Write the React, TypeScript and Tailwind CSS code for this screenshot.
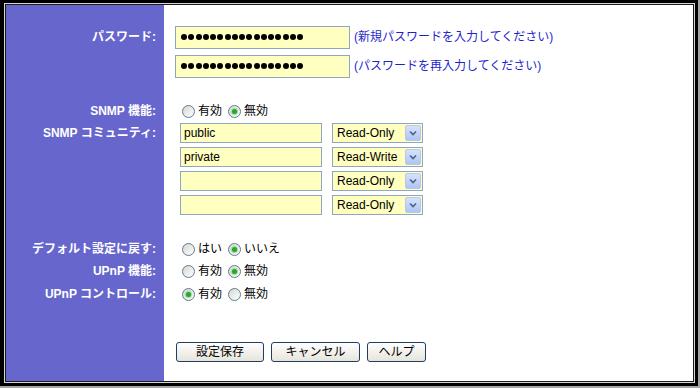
import type { ReactNode } from "react";

const FONT = { fontFamily: '"Liberation Sans", "Noto Sans CJK JP", sans-serif' };

function Row({ h, label, children }: { h: string; label?: string; children?: ReactNode }) {
  return (
    <div className={`flex ${h}`}>
      <div className="w-[158px] shrink-0 bg-[#6666cc] flex items-center justify-end pr-[8px] text-[12px] font-bold text-white whitespace-nowrap">
        {label}
      </div>
      <div className="flex-1 flex items-center">{children}</div>
    </div>
  );
}

function Radio({ checked }: { checked?: boolean }) {
  return (
    <span className="w-[13px] h-[13px] rounded-full border border-[#5f7b98] bg-linear-to-br from-[#d6d6d0] to-white flex items-center justify-center shrink-0">
      {checked && <span className="w-[5px] h-[5px] rounded-full bg-[#2ba62b] shadow-[0_0_1px_1px_#9ad89a]" />}
    </span>
  );
}

function RadioPair({ a, b, first }: { a: string; b: string; first: boolean }) {
  return (
    <div className="flex items-center text-[12px] text-black ml-[18px]">
      <Radio checked={first} />
      <span className="ml-[3px]">{a}</span>
      <span className="ml-[6px]">
        <Radio checked={!first} />
      </span>
      <span className="ml-[3px]">{b}</span>
    </div>
  );
}

function Dots() {
  return (
    <div className="flex items-center gap-[1.25px] ml-[5px]">
      {Array.from({ length: 17 }).map((_, i) => (
        <span key={i} className="w-[6px] h-[6px] rounded-full bg-black" />
      ))}
    </div>
  );
}

function Select({ value }: { value: string }) {
  return (
    <div className="ml-[10px] w-[91px] h-[20px] border border-[#8fa6c3] bg-[#ffffc0] flex items-center justify-between pl-[4px] pr-[1px] text-[12px] text-black">
      <span>{value}</span>
      <span className="w-[16px] h-[16px] rounded-[2px] border border-[#b4c8f2] bg-linear-to-b from-[#d6e2fd] to-[#aec4f5] flex items-center justify-center">
        <svg width="8" height="6" viewBox="0 0 8 6">
          <path d="M1 1.5 L4 4.5 L7 1.5" fill="none" stroke="#4d6185" strokeWidth="1.6" />
        </svg>
      </span>
    </div>
  );
}

function Community({ value, mode }: { value: string; mode: string }) {
  return (
    <div className="flex items-center ml-[16px]">
      <div className="w-[142px] h-[20px] border border-[#8fa6c3] bg-[#ffffc0] flex items-center pl-[3px] text-[12px] text-black">
        {value}
      </div>
      <Select value={mode} />
    </div>
  );
}

function Button({ w, children }: { w: string; children: ReactNode }) {
  return (
    <button
      className={`${w} h-[20px] rounded-[3px] border border-[#1e3e63] bg-linear-to-b from-white to-[#e6e4da] text-[12px] text-black flex items-center justify-center`}
    >
      {children}
    </button>
  );
}

export default function App() {
  return (
    <div className="w-[700px] h-[388px] bg-[#a4a4a4]" style={FONT}>
      <div className="w-[698px] h-[386px] bg-black pl-[4px] pt-[3px] pr-[3px] pb-[3px]">
        <div className="h-full border border-[#d6d6d6]">
          <div className="h-full border border-[#1a1a1a] bg-white flex flex-col">
            <Row h="h-[17px]" />
            <Row h="h-[30px]" label="パスワード:">
              <div className="ml-[11px] w-[175px] h-[23px] border border-[#8fa6c3] bg-[#ffffc0] flex items-center">
                <Dots />
              </div>
              <span className="ml-[4px] text-[12px] text-[#1f1fcc]">(新規パスワードを入力してください)</span>
            </Row>
            <Row h="h-[28px]">
              <div className="ml-[11px] w-[175px] h-[23px] border border-[#8fa6c3] bg-[#ffffc0] flex items-center">
                <Dots />
              </div>
              <span className="ml-[4px] text-[12px] text-[#1f1fcc]">(パスワードを再入力してください)</span>
            </Row>
            <Row h="h-[21px]" />
            <Row h="h-[20px]" label="SNMP 機能:">
              <RadioPair a="有効" b="無効" first={false} />
            </Row>
            <Row h="h-[24px]" label="SNMP コミュニティ:">
              <Community value="public" mode="Read-Only" />
            </Row>
            <Row h="h-[24px]">
              <Community value="private" mode="Read-Write" />
            </Row>
            <Row h="h-[24px]">
              <Community value="" mode="Read-Only" />
            </Row>
            <Row h="h-[24px]">
              <Community value="" mode="Read-Only" />
            </Row>
            <Row h="h-[21px]" />
            <Row h="h-[22px]" label="デフォルト設定に戻す:">
              <RadioPair a="はい" b="いいえ" first={false} />
            </Row>
            <Row h="h-[22px]" label="UPnP 機能:">
              <RadioPair a="有効" b="無効" first={false} />
            </Row>
            <Row h="h-[24px]" label="UPnP コントロール:">
              <RadioPair a="有効" b="無効" first={true} />
            </Row>
            <Row h="h-[34px]" />
            <Row h="h-[23px]">
              <div className="flex items-center gap-[7px] ml-[12px]">
                <Button w="w-[88px]">設定保存</Button>
                <Button w="w-[89px]">キャンセル</Button>
                <Button w="w-[59px]">ヘルプ</Button>
              </div>
            </Row>
            <div className="flex flex-1">
              <div className="w-[158px] shrink-0 bg-[#6666cc]" />
            </div>
          </div>
        </div>
      </div>
    </div>
  );
}
